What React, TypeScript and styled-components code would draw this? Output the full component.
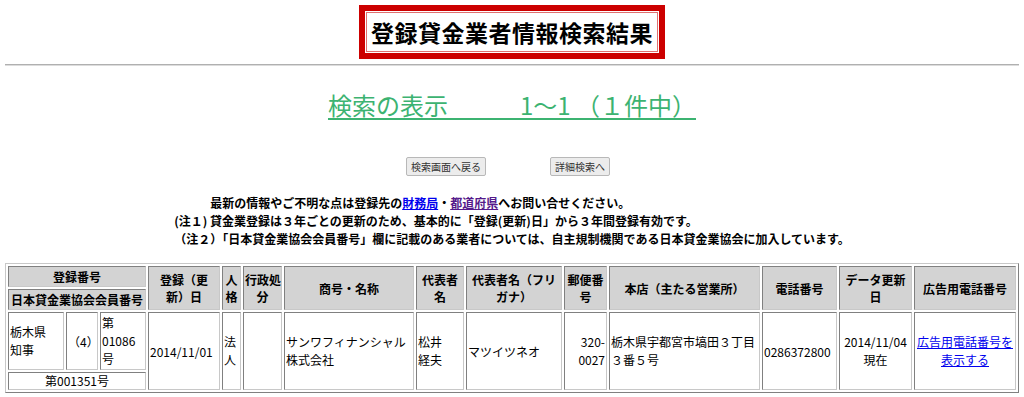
import styled, { createGlobalStyle } from "styled-components";

const GlobalStyle = createGlobalStyle`
  body {
    margin: 0;
    background: #ffffff;
    color: #000000;
    font-family: "Noto Sans CJK JP", "DejaVu Sans", sans-serif;
  }
`;

const Page = styled.div`
  padding: 5px 5px 0;
`;

const TitleRow = styled.div`
  display: flex;
  justify-content: center;
`;

const TitleFrame = styled.div`
  border: 6px solid #cc0000;
  padding: 1px;
`;

const TitleInner = styled.h1`
  margin: 0;
  border: 1px solid #e07070;
  padding: 0 4px;
  height: 38px;
  line-height: 38px;
  font-size: 23px;
  font-weight: bold;
  letter-spacing: 0.5px;
`;

const Rule = styled.hr`
  margin: 5px 0 0;
  height: 0;
  border: 0;
  border-top: 1px solid #b0b0b0;
  border-bottom: 1px solid #dcdcdc;
`;

const Heading = styled.div`
  margin-top: 23px;
  text-align: center;
  font-size: 24px;
  line-height: 32px;
  color: #3cb371;
  text-decoration: underline;
  text-decoration-thickness: 2px;
  text-underline-offset: 3px;
`;

const ButtonRow = styled.div`
  margin-top: 36px;
  display: flex;
  justify-content: center;
  gap: 64px;
  padding-right: 8px;
`;

const Button = styled.button`
  font-family: "Noto Sans CJK JP", sans-serif;
  font-size: 10px;
  line-height: 15px;
  padding: 1px 4px;
  color: #333333;
  background: #ececec;
  border: 1px solid #b8b8b8;
  border-radius: 2px;
`;

const NotesWrap = styled.div`
  margin-top: 18px;
  display: flex;
  justify-content: center;
`;

const Notes = styled.div`
  font-size: 12px;
  font-weight: bold;
  line-height: 18px;
`;

const NoteLink = styled.a<{ $visited?: boolean }>`
  color: ${(p) => (p.$visited ? "#551a8b" : "#0000ee")};
  text-decoration: underline;
`;

const Table = styled.table`
  margin-top: 15px;
  width: 100%;
  table-layout: fixed;
  border-collapse: separate;
  border-spacing: 2px;
  border: 1px solid;
  border-color: #c8c8c8 #808080 #808080 #c8c8c8;
  font-size: 12px;
  line-height: 17px;
`;

const Col = styled.col<{ $w: number }>`
  width: ${(p) => p.$w}px;
`;

const Th = styled.th`
  background: #d3d3d3;
  font-weight: bold;
  text-align: center;
  vertical-align: middle;
  padding: 1px;
  border: 1px solid;
  border-color: #808080 #c8c8c8 #c8c8c8 #808080;
  white-space: nowrap;
`;

const Td = styled.td<{ $align?: "left" | "center" | "right"; $lh?: number }>`
  text-align: ${(p) => p.$align ?? "left"};
  vertical-align: middle;
  padding: 1px;
  border: 1px solid;
  border-color: #808080 #c8c8c8 #c8c8c8 #808080;
  white-space: nowrap;
  ${(p) => (p.$lh ? `line-height: ${p.$lh}px;` : "")}
`;

const AdLink = styled.a`
  color: #0000ee;
  text-decoration: underline;
`;

const widths = [56, 32, 46, 72, 19, 39, 130, 48, 96, 43, 151, 75, 73, 102];

export default function App() {
  return (
    <Page>
      <GlobalStyle />
      <TitleRow>
        <TitleFrame>
          <TitleInner>登録貸金業者情報検索結果</TitleInner>
        </TitleFrame>
      </TitleRow>
      <Rule />
      <Heading>検索の表示　　　1〜1 （１件中）</Heading>
      <ButtonRow>
        <Button>検索画面へ戻る</Button>
        <Button>詳細検索へ</Button>
      </ButtonRow>
      <NotesWrap>
        <Notes>
          <div>
            {"\u3000\u3000\u3000"}最新の情報やご不明な点は登録先の<NoteLink href="#">財務局</NoteLink>・<NoteLink href="#" $visited>都道府県</NoteLink>へお問い合せください。
          </div>
          <div>(注１) 貸金業登録は３年ごとの更新のため、基本的に「登録(更新)日」から３年間登録有効です。</div>
          <div>（注２）「日本貸金業協会会員番号」欄に記載のある業者については、自主規制機関である日本貸金業協会に加入しています。</div>
        </Notes>
      </NotesWrap>
      <Table>
        <colgroup>
          {widths.map((w, i) => (
            <Col key={i} $w={w} />
          ))}
        </colgroup>
        <tbody>
          <tr>
            <Th colSpan={3}>登録番号</Th>
            <Th rowSpan={2}>登録（更<br />新）日</Th>
            <Th rowSpan={2}>人<br />格</Th>
            <Th rowSpan={2}>行政処<br />分</Th>
            <Th rowSpan={2}>商号・名称</Th>
            <Th rowSpan={2}>代表者<br />名</Th>
            <Th rowSpan={2}>代表者名（フリ<br />ガナ）</Th>
            <Th rowSpan={2}>郵便番<br />号</Th>
            <Th rowSpan={2}>本店（主たる営業所）</Th>
            <Th rowSpan={2}>電話番号</Th>
            <Th rowSpan={2}>データ更新<br />日</Th>
            <Th rowSpan={2}>広告用電話番号</Th>
          </tr>
          <tr>
            <Th colSpan={3}>日本貸金業協会会員番号</Th>
          </tr>
          <tr>
            <Td $lh={18}>栃木県<br />知事</Td>
            <Td $align="center">（4）</Td>
            <Td $lh={18}>第<br />01086<br />号</Td>
            <Td rowSpan={2}>2014/11/01</Td>
            <Td rowSpan={2} $lh={18}>法<br />人</Td>
            <Td rowSpan={2}></Td>
            <Td rowSpan={2} $lh={18}>サンワフィナンシャル<br />株式会社</Td>
            <Td rowSpan={2} $lh={18}>松井<br />経夫</Td>
            <Td rowSpan={2}>マツイツネオ</Td>
            <Td rowSpan={2} $align="right" $lh={18}>320-<br />0027</Td>
            <Td rowSpan={2} $lh={18}>栃木県宇都宮市塙田３丁目<br />３番５号</Td>
            <Td rowSpan={2}>0286372800</Td>
            <Td rowSpan={2} $align="center" $lh={18}>2014/11/04<br />現在</Td>
            <Td rowSpan={2} $align="center" $lh={18}>
              <AdLink href="#">広告用電話番号を<br />表示する</AdLink>
            </Td>
          </tr>
          <tr>
            <Td colSpan={3} $align="center" $lh={14}>第001351号</Td>
          </tr>
        </tbody>
      </Table>
    </Page>
  );
}
